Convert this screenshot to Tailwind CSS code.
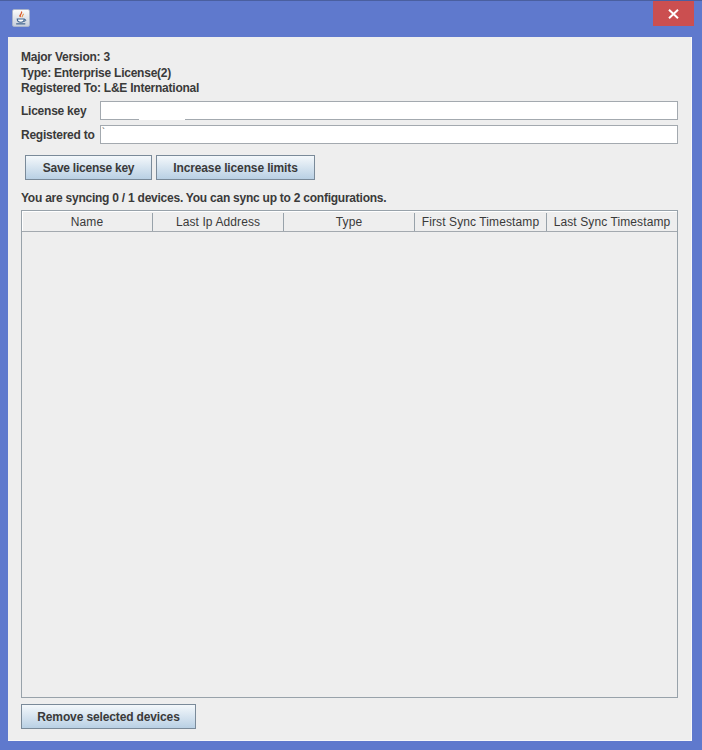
<!DOCTYPE html>
<html lang="en">
<head>
    <meta charset="UTF-8">
    <title>License</title>
    <script src="https://cdn.jsdelivr.net/npm/@tailwindcss/browser@4"></script>
</head>
<body class="w-[702px] h-[750px] overflow-hidden bg-[#5f79cd] font-['Liberation_Sans',Arial,sans-serif] text-[12px] text-[#3a3a3a]">
    <!-- Title bar -->
    <div class="h-[37px] flex items-start justify-between pl-[12px] pr-[8px] border-t border-[#4a5f9f]">
        <div class="mt-[8px] w-[18px] h-[18px] rounded-[2px] bg-gradient-to-b from-[#fafafa] to-[#c9d0dc] border border-[#aab4cc] flex items-center justify-center">
            <svg width="14" height="15" viewBox="0 0 13 14">
                <path d="M7 .5c1.200 1.800-2.200 2.500-1 5C4 4 7.500 3 7 .5z" fill="#d8572a" stroke="#d8572a" stroke-width="1"/>
                <path d="M8.500 2.500c.8 1.200-1.500 1.700-.8 3.300" fill="none" stroke="#e58a3c" stroke-width="1"/>
                <path d="M3 7.500h6.500c0 2-1 3-3.200 3S3 9.500 3 7.500z" fill="#fff" stroke="#41648f" stroke-width="1"/>
                <path d="M9.500 8h1.200c.8.900-.4 1.700-1.600 1.700" fill="none" stroke="#41648f" stroke-width=".9"/>
                <path d="M2 12h8.500" stroke="#41648f" stroke-width="1.100"/>
            </svg>
        </div>
        <div class="w-[41px] h-[25px] bg-[#cb4f50] flex items-center justify-center">
            <svg width="11" height="10" viewBox="0 0 11 10"><path d="M1 .8l9 8.400M10 .8l-9 8.400" stroke="#fff" stroke-width="2"/></svg>
        </div>
    </div>

    <!-- Content panel -->
    <div class="mx-[8px] w-[684px] h-[704px] bg-[#eeeeee] border-r border-b border-[#f8f8f8] pt-[13px] pl-[13px] font-bold tracking-[-0.24px] flex flex-col">
        <div class="leading-[15.500px]">
            <div>Major Version: 3</div>
            <div>Type: Enterprise License(2)</div>
            <div>Registered To: L&amp;E International</div>
        </div>

        <div class="mt-[4.500px] h-[19px] flex items-center">
            <span class="w-[79px] shrink-0 pt-[1px]">License key</span>
            <div class="relative w-[578px] h-[19px] bg-white border border-[#a3a9af]">
                <div class="absolute left-[38px] -bottom-[1px] w-[46px] h-[2px] bg-white"></div>
            </div>
        </div>
        <div class="mt-[5px] h-[19px] flex items-center">
            <span class="w-[79px] shrink-0 pt-[1px]">Registered to</span>
            <div class="w-[578px] h-[19px] bg-white border border-[#a3a9af] pl-[1px] leading-[10px] font-normal text-[9px]">`</div>
        </div>

        <div class="mt-[10.500px] ml-[4px] flex gap-[4px]">
            <button class="w-[127px] h-[25px] pt-[2px] border border-[#7a8a99] bg-gradient-to-b from-[#f4f8fb] to-[#b9d0e4] font-bold">Save license key</button>
            <button class="w-[159px] h-[25px] pt-[2px] border border-[#7a8a99] bg-gradient-to-b from-[#f4f8fb] to-[#b9d0e4] font-bold tracking-[-0.13px]">Increase license limits</button>
        </div>

        <div class="mt-[11px] leading-[14px]">You are syncing 0 / 1 devices. You can sync up to 2 configurations.</div>

        <!-- Device table -->
        <div class="mt-[5px] w-[657px] h-[488px] border border-[#98a2aa] font-normal tracking-[0.1px] flex flex-col">
            <div class="h-[21px] pt-[2px] flex border-b border-[#a3a9af] bg-[#eeeeee] shadow-[inset_1px_1px_0_#ffffff]">
                <div class="w-[131px] border-r border-[#98a2aa] flex items-center justify-center">Name</div>
                <div class="w-[131px] border-r border-[#98a2aa] flex items-center justify-center">Last Ip Address</div>
                <div class="w-[131px] border-r border-[#98a2aa] flex items-center justify-center">Type</div>
                <div class="w-[132px] border-r border-[#98a2aa] flex items-center justify-center">First Sync Timestamp</div>
                <div class="flex-1 flex items-center justify-center">Last Sync Timestamp</div>
            </div>
            <div class="flex-1"></div>
        </div>

        <div class="mt-[6px]">
            <button class="w-[175px] h-[25px] pt-[2px] border border-[#7a8a99] bg-gradient-to-b from-[#f4f8fb] to-[#b9d0e4] font-bold tracking-[-0.13px]">Remove selected devices</button>
        </div>
    </div>
</body>
</html>
